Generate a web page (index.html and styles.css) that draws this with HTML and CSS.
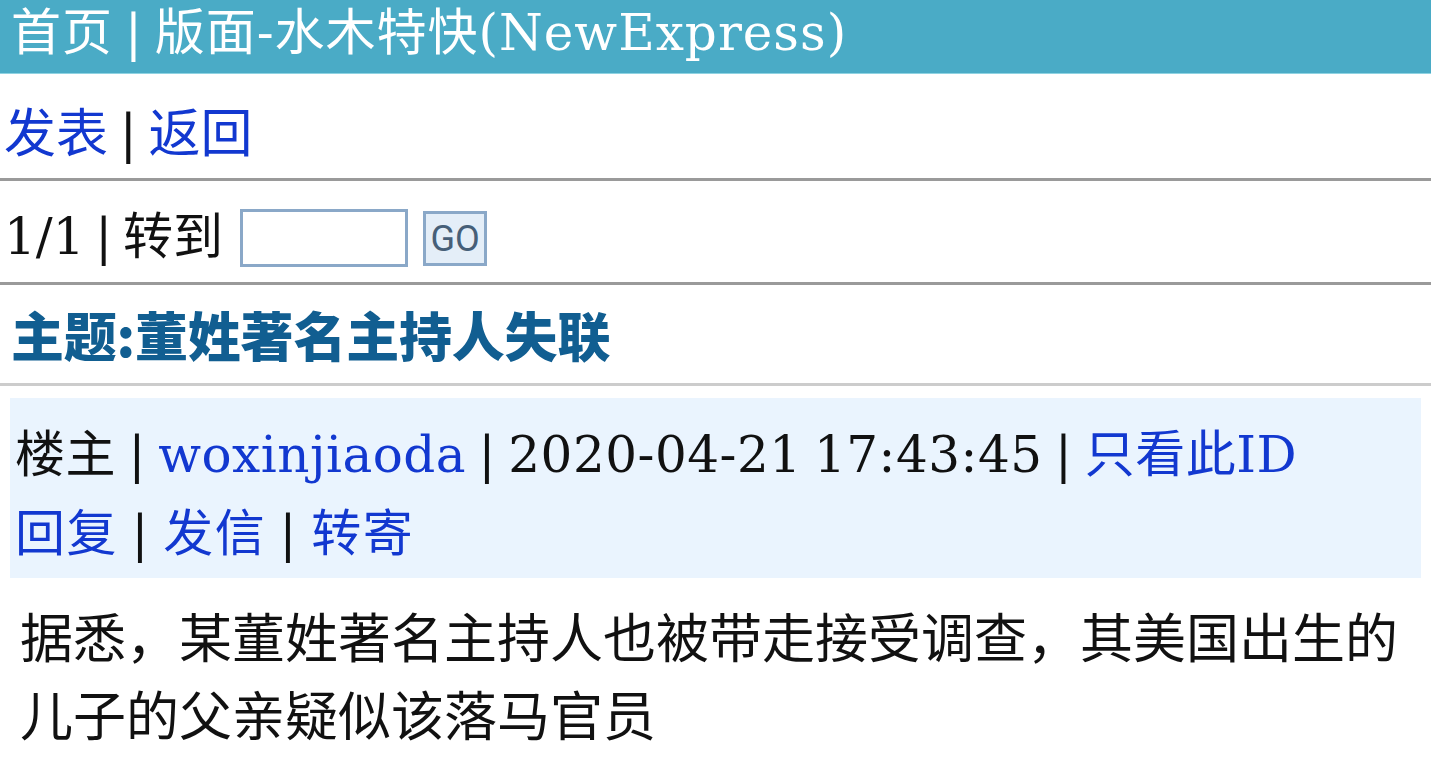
FILE: index.html
```html
<!DOCTYPE html>
<html lang="zh-CN">
<head>
<meta charset="utf-8">
<title>水木特快</title>
<link rel="stylesheet" href="styles.css">
</head>
<body>
<div class="page">
  <div class="topbar">首页 | 版面-水木特快(NewExpress)</div>
  <div class="row nav"><span><a href="#">发表</a> | <a href="#">返回</a></span></div>
  <hr class="rule dark">
  <div class="row pager">
    <span class="pager-text">1/1 | 转到</span>
    <input class="jump" type="text">
    <button class="go" type="button">GO</button>
  </div>
  <hr class="rule dark">
  <div class="row title">主题:董姓著名主持人失联</div>
  <hr class="rule light">
  <div class="post-head">
    <div class="line">楼主 | <a href="#">woxinjiaoda</a> | 2020-04-21 17:43:45 | <a href="#">只看此ID</a></div>
    <div class="line"><a href="#">回复</a> | <a href="#">发信</a> | <a href="#">转寄</a></div>
  </div>
  <div class="post-body">据悉，某董姓著名主持人也被带走接受调查，其美国出生的儿子的父亲疑似该落马官员</div>
</div>
</body>
</html>
```
FILE: styles.css
```css
html, body {
  margin: 0;
  padding: 0;
  background: #ffffff;
}
body {
  font-family: "DejaVu Serif", "Noto Sans CJK SC", serif;
  color: #111111;
}
.page {
  width: 1431px;
}
a {
  color: #1238d0;
  text-decoration: none;
}
.topbar {
  background: #4aabc6;
  color: #ffffff;
  font-size: 50px;
  height: 74px;
  line-height: 66px;
  padding-left: 11px;
  border-bottom: 1px solid #8fd3e2;
  box-sizing: border-box;
  word-spacing: -5px;
  letter-spacing: 1px;
}
.row {
  display: flex;
  align-items: center;
  padding-left: 4px;
  font-size: 50px;
  word-spacing: -5px;
}
.nav {
  height: 104px;
  padding-top: 6px;
  box-sizing: border-box;
  font-size: 52px;
}
.rule {
  margin: 0;
  border: 0;
  height: 3px;
}
.rule.dark {
  background: #9a9a9a;
}
.rule.light {
  background: #cccccc;
}
.pager {
  height: 101px;
}
.jump {
  width: 168px;
  height: 58px;
  box-sizing: border-box;
  border: 3px solid #8aa8c8;
  margin: 12px 0 0 17px;
  padding: 0;
  background: #ffffff;
}
.go {
  width: 64px;
  height: 55px;
  box-sizing: border-box;
  border: 3px solid #8aa8c8;
  background: #e4eef8;
  color: #465f78;
  font-family: Roboto, "Liberation Sans", sans-serif;
  font-size: 36px;
  padding: 0;
  margin: 14px 0 0 15px;
  line-height: 1;
}
.title {
  height: 98px;
  padding-left: 11px;
  font-family: "Noto Sans CJK SC", sans-serif;
  font-weight: 900;
  font-size: 53px;
  color: #115e91;
  letter-spacing: -0.2px;
}
.post-head {
  margin: 12px 10px 0 10px;
  background: #eaf4fe;
  padding: 18px 4px 4px 5px;
  height: 180px;
  box-sizing: border-box;
  font-size: 50px;
  word-spacing: -4px;
  letter-spacing: 0.5px;
}
.post-head .line {
  height: 79px;
  line-height: 79px;
  white-space: nowrap;
}
.post-head .line + .line {
  letter-spacing: 1.5px;
}
.post-body {
  padding: 18px 8px 0 20px;
  font-family: "Noto Sans CJK SC", sans-serif;
  font-size: 53px;
  line-height: 78px;
  color: #111111;
}
```
